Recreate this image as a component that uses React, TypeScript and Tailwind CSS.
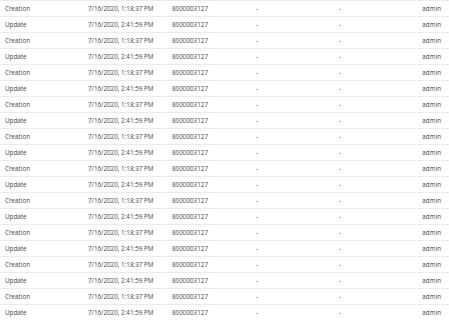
const rows = Array.from({ length: 20 }, (_, i) =>
  i % 2 === 0
    ? { action: "Creation", date: "7/16/2020, 1:18:37 PM" }
    : { action: "Update", date: "7/16/2020, 2:41:59 PM" }
)

export default function App() {
  return (
    <div className="w-[449px] h-[320px] overflow-hidden bg-white antialiased text-[6.3px] text-[#484644] font-['Open_Sans',sans-serif]">
      {rows.map((r, i) => (
        <div key={i} className="flex items-center h-[16px] border-t border-[#edebe9] pl-[5px] pr-[8px] pt-px">
          <div className="w-[83px] shrink-0">{r.action}</div>
          <div className="w-[84px] shrink-0">{r.date}</div>
          <div className="w-[84px] shrink-0">8000003127</div>
          <div className="w-[83px] shrink-0">-</div>
          <div className="flex-1">-</div>
          <div className="text-right text-[#484644]">admin</div>
        </div>
      ))}
    </div>
  )
}
